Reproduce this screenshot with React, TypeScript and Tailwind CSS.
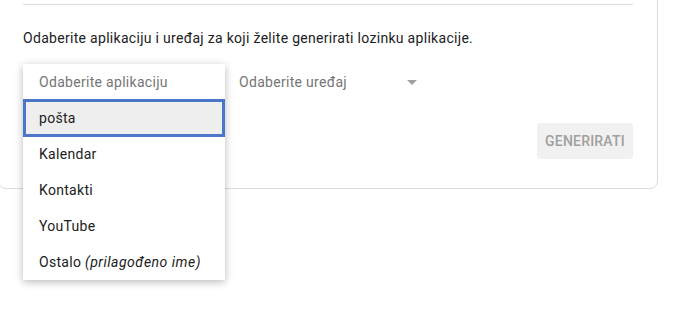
const apps = ["pošta", "Kalendar", "Kontakti", "YouTube"];

export default function App() {
  return (
    <div className="w-[692px] h-[333px] overflow-hidden bg-white font-['Roboto',sans-serif] text-[14px] tracking-[0.3px] text-[#202124]">
      <div className="mt-[-21px] ml-[-2px] w-[660px] border border-[#dadce0] rounded-lg pt-[24px] px-[24px] pb-[29px]">
        <div className="border-t border-[#e0e0e0]" />
        <p className="mt-[23px] leading-5">
          Odaberite aplikaciju i uređaj za koji želite generirati lozinku aplikacije.
        </p>

        <div className="mt-[16px] flex h-9 items-center gap-4">
          <div className="relative h-9 w-[200px]">
            <div className="absolute left-0 top-0 z-10 w-[202px] bg-white shadow-[0_2px_8px_rgba(0,0,0,0.28)]">
              <div className="flex h-9 items-center px-4 text-[#757575]">Odaberite aplikaciju</div>
              {apps.map((a, i) => (
                <div
                  key={a}
                  className={
                    i === 0
                      ? "relative flex h-9 items-center bg-[#eeeeee] px-4 text-[#212121]"
                      : "flex h-9 items-center px-4 text-[#212121]"
                  }
                >
                  {i === 0 && (
                    <span className="absolute left-0 right-0 top-[-1px] bottom-[-1px] border-[3px] border-[#4a77c9]" />
                  )}
                  <span className="relative">{a}</span>
                </div>
              ))}
              <div className="flex h-9 items-center px-4 text-[#212121]">
                Ostalo&nbsp;<i className="tracking-[0.5px]">(prilagođeno ime)</i>
              </div>
            </div>
          </div>
          <div className="flex w-[178px] items-center justify-between text-[#757575]">
            <span>Odaberite uređaj</span>
            <svg width="10" height="5" viewBox="0 0 10 5">
              <path d="M0 0h10L5 5z" fill="#a0a0a0" />
            </svg>
          </div>
        </div>

        <div className="mt-[23px] flex justify-end">
          <button className="h-9 w-24 rounded-sm bg-[#f1f1f1] text-[14px] font-medium tracking-[0.2px] text-[#a0a0a0]">
            GENERIRATI
          </button>
        </div>
      </div>
    </div>
  );
}
